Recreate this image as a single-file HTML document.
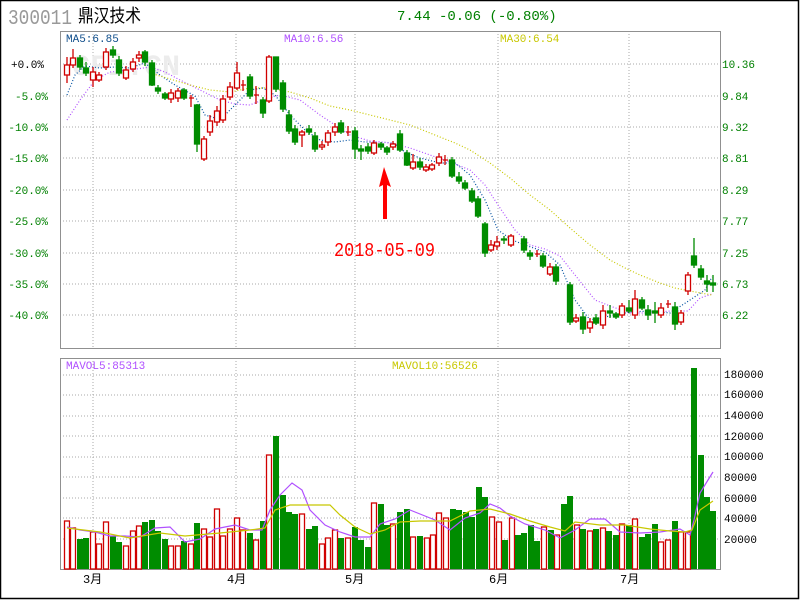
<!DOCTYPE html>
<html><head><meta charset="utf-8"><style>
html,body{margin:0;padding:0;background:#fff}
svg{display:block}
text{font-family:"Liberation Mono","DejaVu Sans Mono",monospace}
</style></head><body>
<svg width="800" height="600" viewBox="0 0 800 600" xmlns="http://www.w3.org/2000/svg">
<rect x="0.5" y="0.5" width="798" height="598" fill="#fff" stroke="#000" stroke-width="1.5"/>
<text x="8" y="24" font-family="Liberation Sans,sans-serif" font-size="21" fill="#999" textLength="64" lengthAdjust="spacingAndGlyphs">300011</text>
<text x="78" y="22" font-family="Liberation Sans,'Noto Sans CJK SC',sans-serif" font-size="18" fill="#000" textLength="63" lengthAdjust="spacingAndGlyphs">鼎汉技术</text>
<text x="397" y="20" font-size="14" fill="#008000">7.44 -0.06 (-0.80%)</text>
<g stroke="#a8a8a8" stroke-dasharray="1,2" stroke-width="1">
<line x1="60" y1="64" x2="720" y2="64"/><line x1="60" y1="96" x2="720" y2="96"/><line x1="60" y1="127" x2="720" y2="127"/><line x1="60" y1="158" x2="720" y2="158"/><line x1="60" y1="190" x2="720" y2="190"/><line x1="60" y1="221" x2="720" y2="221"/><line x1="60" y1="253" x2="720" y2="253"/><line x1="60" y1="284" x2="720" y2="284"/><line x1="60" y1="315" x2="720" y2="315"/>
<line x1="93" y1="31" x2="93" y2="348"/><line x1="236" y1="31" x2="236" y2="348"/><line x1="355" y1="31" x2="355" y2="348"/><line x1="498" y1="31" x2="498" y2="348"/><line x1="629" y1="31" x2="629" y2="348"/>
<line x1="60" y1="375" x2="720" y2="375"/><line x1="60" y1="395" x2="720" y2="395"/><line x1="60" y1="416" x2="720" y2="416"/><line x1="60" y1="436" x2="720" y2="436"/><line x1="60" y1="457" x2="720" y2="457"/><line x1="60" y1="477" x2="720" y2="477"/><line x1="60" y1="498" x2="720" y2="498"/><line x1="60" y1="518" x2="720" y2="518"/><line x1="60" y1="539" x2="720" y2="539"/>
<line x1="93" y1="358" x2="93" y2="569"/><line x1="236" y1="358" x2="236" y2="569"/><line x1="355" y1="358" x2="355" y2="569"/><line x1="498" y1="358" x2="498" y2="569"/><line x1="629" y1="358" x2="629" y2="569"/>
</g>
<rect x="60.5" y="31.5" width="660" height="317" fill="none" stroke="#909090"/>
<rect x="60.5" y="358.5" width="660" height="211" fill="none" stroke="#909090"/>
<text x="72" y="75" font-family="Liberation Sans,sans-serif" font-weight="bold" font-size="30" fill="#ececec">CFi.CN</text>
<g font-size="11">
<text x="66" y="42" fill="#104e8b">MA5:6.85</text>
<text x="284" y="42" fill="#b050ff">MA10:6.56</text>
<text x="500" y="42" fill="#c8c800">MA30:6.54</text>
<text x="66" y="369" fill="#b050ff">MAVOL5:85313</text>
<text x="392" y="369" fill="#c8c800">MAVOL10:56526</text>
</g>
<g font-size="11" fill="#008000" text-anchor="end">
<text x="44" y="68" fill="#000">+0.0%</text><text x="48" y="100">-5.0%</text><text x="48" y="131">-10.0%</text><text x="48" y="162">-15.0%</text><text x="48" y="194">-20.0%</text><text x="48" y="225">-25.0%</text><text x="48" y="257">-30.0%</text><text x="48" y="288">-35.0%</text><text x="48" y="319">-40.0%</text>
</g>
<g font-size="11" fill="#008000">
<text x="722" y="68">10.36</text><text x="722" y="100">9.84</text><text x="722" y="131">9.32</text><text x="722" y="162">8.81</text><text x="722" y="194">8.29</text><text x="722" y="225">7.77</text><text x="722" y="257">7.25</text><text x="722" y="288">6.73</text><text x="722" y="319">6.22</text>
</g>
<g font-size="11" fill="#000">
<text x="724" y="378">180000</text><text x="724" y="398">160000</text><text x="724" y="419">140000</text><text x="724" y="440">120000</text><text x="724" y="460">100000</text><text x="724" y="481">80000</text><text x="724" y="502">60000</text><text x="724" y="522">40000</text><text x="724" y="543">20000</text>
</g>
<g font-size="12" fill="#000" font-family="Liberation Sans,'Noto Sans CJK SC',sans-serif">
<text x="83" y="583">3月</text><text x="227" y="583">4月</text><text x="345" y="583">5月</text><text x="489" y="583">6月</text><text x="620" y="583">7月</text>
</g>
<g fill="none" stroke-dasharray="1,2" stroke-width="1.2">
<polyline stroke="#0050a0" points="67,95 75,75 85,66 100,68 115,67 130,68 145,63 160,75 175,85 195,96 205,115 215,118 225,115 235,105 250,90 263,88 275,95 290,115 305,130 320,140 335,142 350,140 365,142 380,142 393,143 405,152 420,158 440,163 455,163 470,175 485,200 498,230 512,240 525,245 545,252 560,265 575,300 590,320 610,316 630,312 650,311 670,313 690,300 705,290 712,277"/>
<polyline stroke="#b050ff" points="67,120 80,100 95,80 110,72 130,70 150,67 165,72 180,80 200,90 220,100 235,104 250,105 265,99 280,95 300,100 320,115 335,125 350,135 370,141 390,143 410,148 430,155 450,162 470,170 485,185 500,208 515,230 530,245 545,249 560,256 575,275 595,300 610,306 630,313 650,313 670,311 688,311 700,298 712,294"/>
<polyline stroke="#c8c800" points="150,73 170,79 190,85 210,90 230,92 250,88 270,88 290,92 310,98 330,106 350,110 370,115 390,120 410,125 430,133 455,143 470,150 490,163 510,178 530,195 550,210 570,228 590,245 610,260 625,268 640,275 660,283 675,288 690,291 712,295"/>
</g>
<g stroke="#d00000" fill="#fff" stroke-width="1.3">
<path d="M67 57V83M73 49V68M93 67V87M99 72V82M106 48V70M126 66V80M133 58V72M139 51V62M171 89V103M178 88V102M191 95V107M204 136V161M210 115V136M217 106V126M223 95V123M230 82V100M237 62V90M243 80V91M256 86V104M269 55V103M302 130V147M322 141V150M328 130V146M335 123V136M348 126V136M374 140V155M393 141V150M413 154V170M426 164V172M432 163V171M439 153V166M445 155V165M491 240V252M497 236V250M511 234V247M537 250V257M550 263V276M576 314V323M590 318V333M603 305V329M622 303V318M635 290V319M661 303V318M668 300V308M681 310V325M688 272V295"/>
<path d="M241 85H246M254 95H259M189 98H194M346 132H351M443 160H448M535 254H540M666 304H671"/>
<rect x="64.5" y="65" width="5" height="10"/><rect x="70.5" y="58" width="5" height="7"/><rect x="90.5" y="72" width="5" height="8"/><rect x="96.5" y="75" width="5" height="5"/><rect x="103.5" y="52" width="5" height="15"/><rect x="123.5" y="70" width="5" height="8"/><rect x="130.5" y="62" width="5" height="7"/><rect x="136.5" y="55" width="5" height="3"/><rect x="168.5" y="93" width="5" height="6"/><rect x="175.5" y="91" width="5" height="7"/><rect x="201.5" y="139" width="5" height="20"/><rect x="207.5" y="121" width="5" height="11"/><rect x="214.5" y="111" width="5" height="11"/><rect x="220.5" y="99" width="5" height="21"/><rect x="227.5" y="87" width="5" height="10"/><rect x="234.5" y="73" width="5" height="15"/><rect x="266.5" y="57" width="5" height="44"/><rect x="299.5" y="132" width="5" height="3"/><rect x="319.5" y="145" width="5" height="2"/><rect x="325.5" y="133" width="5" height="9"/><rect x="332.5" y="127" width="5" height="5"/><rect x="371.5" y="143" width="5" height="10"/><rect x="390.5" y="144" width="5" height="3"/><rect x="410.5" y="162" width="5" height="6"/><rect x="423.5" y="167" width="5" height="3"/><rect x="429.5" y="165" width="5" height="4"/><rect x="436.5" y="157" width="5" height="6"/><rect x="488.5" y="245" width="5" height="5"/><rect x="494.5" y="242" width="5" height="4"/><rect x="508.5" y="236" width="5" height="9"/><rect x="547.5" y="267" width="5" height="7"/><rect x="573.5" y="318" width="5" height="3"/><rect x="587.5" y="322" width="5" height="6"/><rect x="600.5" y="311" width="5" height="14"/><rect x="619.5" y="306" width="5" height="9"/><rect x="632.5" y="299" width="5" height="16"/><rect x="658.5" y="308" width="5" height="7"/><rect x="678.5" y="313" width="5" height="9"/><rect x="685.5" y="275" width="5" height="16"/>
</g>
<g stroke="#008c00" fill="#008c00" stroke-width="1.3">
<path d="M80 55V70M86 62V76M113 46V58M119 56V76M145 50V66M152 60V86M158 85V94M165 92V100M184 88V100M197 104V152M250 74V99M263 97V118M276 57V92M283 80V112M289 110V134M295 125V145M309 125V135M315 132V152M341 120V134M355 127V159M361 145V160M368 143V154M381 142V150M387 146V155M400 130V152M407 150V166M420 158V170M452 157V178M459 172V184M465 180V190M472 188V203M478 196V218M485 222V257M504 236V244M524 236V253M530 250V260M543 253V268M556 264V285M570 282V325M583 312V334M596 314V325M610 305V318M616 312V319M629 300V313M642 297V310M648 305V320M655 302V323M675 302V330M694 238V268M701 265V280M707 275V292M713 275V292"/>
<rect x="77.5" y="58" width="5" height="9"/><rect x="83.5" y="68" width="5" height="5"/><rect x="110.5" y="50" width="5" height="5"/><rect x="116.5" y="60" width="5" height="13"/><rect x="142.5" y="52" width="5" height="10"/><rect x="149.5" y="63" width="5" height="22"/><rect x="155.5" y="88" width="5" height="3"/><rect x="162.5" y="94" width="5" height="4"/><rect x="181.5" y="90" width="5" height="8"/><rect x="194.5" y="105" width="5" height="39"/><rect x="247.5" y="77" width="5" height="19"/><rect x="260.5" y="100" width="5" height="13"/><rect x="273.5" y="57" width="5" height="32"/><rect x="280.5" y="83" width="5" height="26"/><rect x="286.5" y="115" width="5" height="16"/><rect x="292.5" y="129" width="5" height="13"/><rect x="306.5" y="129" width="5" height="3"/><rect x="312.5" y="136" width="5" height="13"/><rect x="338.5" y="123" width="5" height="9"/><rect x="352.5" y="131" width="5" height="18"/><rect x="358.5" y="149" width="5" height="2"/><rect x="365.5" y="147" width="5" height="4"/><rect x="378.5" y="144" width="5" height="3"/><rect x="384.5" y="148" width="5" height="4"/><rect x="397.5" y="134" width="5" height="16"/><rect x="404.5" y="153" width="5" height="12"/><rect x="417.5" y="162" width="5" height="5"/><rect x="449.5" y="160" width="5" height="16"/><rect x="456.5" y="177" width="5" height="4"/><rect x="462.5" y="183" width="5" height="5"/><rect x="469.5" y="191" width="5" height="10"/><rect x="475.5" y="199" width="5" height="17"/><rect x="482.5" y="224" width="5" height="29"/><rect x="501.5" y="239" width="5" height="1"/><rect x="521.5" y="239" width="5" height="11"/><rect x="527.5" y="253" width="5" height="3"/><rect x="540.5" y="256" width="5" height="10"/><rect x="553.5" y="267" width="5" height="14"/><rect x="567.5" y="285" width="5" height="37"/><rect x="580.5" y="317" width="5" height="12"/><rect x="593.5" y="318" width="5" height="5"/><rect x="607.5" y="311" width="5" height="2"/><rect x="613.5" y="314" width="5" height="3"/><rect x="626.5" y="308" width="5" height="3"/><rect x="639.5" y="300" width="5" height="8"/><rect x="645.5" y="310" width="5" height="5"/><rect x="652.5" y="311" width="5" height="2"/><rect x="672.5" y="307" width="5" height="17"/><rect x="691.5" y="256" width="5" height="9"/><rect x="698.5" y="269" width="5" height="8"/><rect x="704.5" y="281" width="5" height="3"/><rect x="710.5" y="283" width="5" height="2"/>
</g>
<path d="M384 167 L379 187 L383 185 L383 219 L387 219 L387 185 L391 187 Z" fill="#ff0000"/>
<text x="334" y="256" font-size="19" fill="#ff0000" textLength="101" lengthAdjust="spacingAndGlyphs">2018-05-09</text>
<g stroke="#d00000" fill="#fff" stroke-width="1.3">
<rect x="64.5" y="521" width="5" height="48"/><rect x="70.5" y="528" width="5" height="41"/><rect x="90.5" y="532" width="5" height="37"/><rect x="96.5" y="544" width="5" height="25"/><rect x="103.5" y="522" width="5" height="47"/><rect x="123.5" y="546" width="5" height="23"/><rect x="130.5" y="531" width="5" height="38"/><rect x="136.5" y="526" width="5" height="43"/><rect x="168.5" y="546" width="5" height="23"/><rect x="175.5" y="546" width="5" height="23"/><rect x="188.5" y="544" width="5" height="25"/><rect x="201.5" y="529" width="5" height="40"/><rect x="207.5" y="537" width="5" height="32"/><rect x="214.5" y="509" width="5" height="60"/><rect x="220.5" y="536" width="5" height="33"/><rect x="227.5" y="529" width="5" height="40"/><rect x="234.5" y="518" width="5" height="51"/><rect x="240.5" y="530" width="5" height="39"/><rect x="253.5" y="540" width="5" height="29"/><rect x="266.5" y="455" width="5" height="114"/><rect x="299.5" y="514" width="5" height="55"/><rect x="319.5" y="544" width="5" height="25"/><rect x="325.5" y="538" width="5" height="31"/><rect x="332.5" y="530" width="5" height="39"/><rect x="345.5" y="538" width="5" height="31"/><rect x="371.5" y="503" width="5" height="66"/><rect x="390.5" y="524" width="5" height="45"/><rect x="410.5" y="537" width="5" height="32"/><rect x="424.5" y="538" width="5" height="31"/><rect x="430.5" y="535" width="5" height="34"/><rect x="436.5" y="513" width="5" height="56"/><rect x="443.5" y="518" width="5" height="51"/><rect x="489.5" y="517" width="5" height="52"/><rect x="496.5" y="522" width="5" height="47"/><rect x="509.5" y="518" width="5" height="51"/><rect x="541.5" y="527" width="5" height="42"/><rect x="554.5" y="535" width="5" height="34"/><rect x="574.5" y="525" width="5" height="44"/><rect x="587.5" y="531" width="5" height="38"/><rect x="600.5" y="528" width="5" height="41"/><rect x="619.5" y="524" width="5" height="45"/><rect x="632.5" y="519" width="5" height="50"/><rect x="658.5" y="542" width="5" height="27"/><rect x="665.5" y="540" width="5" height="29"/><rect x="678.5" y="532" width="5" height="37"/><rect x="685.5" y="532" width="5" height="37"/>
</g>
<g fill="#008c00">
<rect x="77" y="539" width="6" height="30"/><rect x="83" y="538" width="6" height="31"/><rect x="110" y="536" width="6" height="33"/><rect x="116" y="542" width="6" height="27"/><rect x="142" y="522" width="6" height="47"/><rect x="149" y="520" width="6" height="49"/><rect x="155" y="531" width="6" height="38"/><rect x="162" y="539" width="6" height="30"/><rect x="181" y="541" width="6" height="28"/><rect x="194" y="523" width="6" height="46"/><rect x="247" y="533" width="6" height="36"/><rect x="260" y="521" width="6" height="48"/><rect x="273" y="436" width="6" height="133"/><rect x="280" y="495" width="6" height="74"/><rect x="286" y="512" width="6" height="57"/><rect x="292" y="514" width="6" height="55"/><rect x="306" y="529" width="6" height="40"/><rect x="312" y="526" width="6" height="43"/><rect x="338" y="538" width="6" height="31"/><rect x="352" y="527" width="6" height="42"/><rect x="358" y="540" width="6" height="29"/><rect x="365" y="547" width="6" height="22"/><rect x="378" y="504" width="6" height="65"/><rect x="384" y="525" width="6" height="44"/><rect x="397" y="512" width="6" height="57"/><rect x="404" y="509" width="6" height="60"/><rect x="417" y="536" width="6" height="33"/><rect x="450" y="509" width="6" height="60"/><rect x="456" y="510" width="6" height="59"/><rect x="463" y="512" width="6" height="57"/><rect x="469" y="517" width="6" height="52"/><rect x="476" y="487" width="6" height="82"/><rect x="482" y="497" width="6" height="72"/><rect x="502" y="540" width="6" height="29"/><rect x="515" y="535" width="6" height="34"/><rect x="521" y="533" width="6" height="36"/><rect x="528" y="525" width="6" height="44"/><rect x="534" y="541" width="6" height="28"/><rect x="548" y="530" width="6" height="39"/><rect x="561" y="504" width="6" height="65"/><rect x="567" y="496" width="6" height="73"/><rect x="580" y="529" width="6" height="40"/><rect x="593" y="529" width="6" height="40"/><rect x="606" y="531" width="6" height="38"/><rect x="613" y="535" width="6" height="34"/><rect x="626" y="525" width="6" height="44"/><rect x="639" y="537" width="6" height="32"/><rect x="645" y="534" width="6" height="35"/><rect x="652" y="524" width="6" height="45"/><rect x="672" y="521" width="6" height="48"/><rect x="691" y="368" width="6" height="201"/><rect x="698" y="455" width="6" height="114"/><rect x="704" y="497" width="6" height="72"/><rect x="710" y="511" width="6" height="58"/>
</g>
<g fill="none" stroke-width="1.2">
<polyline stroke="#b050ff" points="67,527 80,530 95,532 110,536 125,536 140,537 155,528 170,527 185,542 200,539 215,529 235,525 250,530 262,530 270,510 280,495 292,483 302,490 310,510 325,525 340,532 355,537 370,537 380,524 395,519 410,510 420,514 435,520 450,530 465,518 480,513 490,504 500,508 510,516 525,524 545,530 560,538 575,530 590,519 605,519 620,532 640,533 660,532 680,529 690,535 694,520 700,493 708,480 713,472"/>
<polyline stroke="#c8c800" points="67,528 100,532 130,538 160,533 185,536 220,533 250,530 265,528 275,510 290,505 320,505 330,505 340,515 355,527 370,534 385,530 400,522 420,521 450,521 470,511 490,509 510,514 530,521 550,527 565,531 575,522 600,525 625,525 650,529 670,531 685,532 692,530 700,510 713,501"/>
</g>
</svg>
</body></html>
